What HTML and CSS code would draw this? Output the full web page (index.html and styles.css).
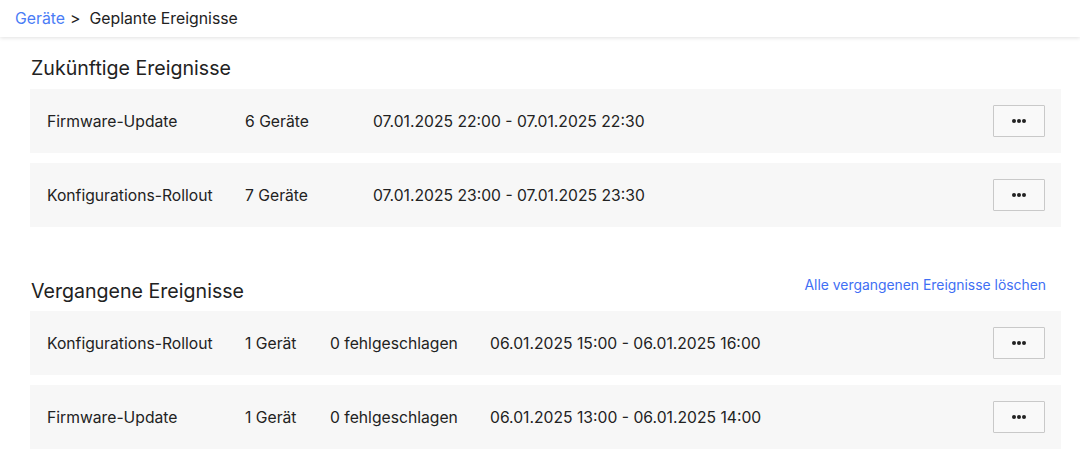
FILE: index.html
```html
<!DOCTYPE html>
<html lang="de">
<head>
<meta charset="utf-8">
<title>Geplante Ereignisse</title>
<link rel="stylesheet" href="styles.css">
</head>
<body>
<header class="topbar">
  <nav class="breadcrumb">
    <a class="crumb-link" href="#">Geräte</a>
    <span class="crumb-sep">&gt;</span>
    <span class="crumb-current">Geplante Ereignisse</span>
  </nav>
</header>
<main class="content">
  <section class="section">
    <div class="section-head">
      <h2 class="section-title">Zukünftige Ereignisse</h2>
    </div>
    <div class="rows">
      <div class="row">
        <span class="col col-name">Firmware-Update</span>
        <span class="col col-devices-wide">6 Geräte</span>
        <span class="col col-time">07.01.2025 22:00 - 07.01.2025 22:30</span>
        <button class="more-btn" type="button" aria-label="Mehr"><span class="dots"><i></i><i></i><i></i></span></button>
      </div>
      <div class="row">
        <span class="col col-name">Konfigurations-Rollout</span>
        <span class="col col-devices-wide">7 Geräte</span>
        <span class="col col-time">07.01.2025 23:00 - 07.01.2025 23:30</span>
        <button class="more-btn" type="button" aria-label="Mehr"><span class="dots"><i></i><i></i><i></i></span></button>
      </div>
    </div>
  </section>
  <section class="section section-past">
    <div class="section-head">
      <h2 class="section-title">Vergangene Ereignisse</h2>
      <a class="clear-link" href="#">Alle vergangenen Ereignisse löschen</a>
    </div>
    <div class="rows">
      <div class="row">
        <span class="col col-name">Konfigurations-Rollout</span>
        <span class="col col-devices">1 Gerät</span>
        <span class="col col-failed">0 fehlgeschlagen</span>
        <span class="col col-time">06.01.2025 15:00 - 06.01.2025 16:00</span>
        <button class="more-btn" type="button" aria-label="Mehr"><span class="dots"><i></i><i></i><i></i></span></button>
      </div>
      <div class="row">
        <span class="col col-name">Firmware-Update</span>
        <span class="col col-devices">1 Gerät</span>
        <span class="col col-failed">0 fehlgeschlagen</span>
        <span class="col col-time">06.01.2025 13:00 - 06.01.2025 14:00</span>
        <button class="more-btn" type="button" aria-label="Mehr"><span class="dots"><i></i><i></i><i></i></span></button>
      </div>
    </div>
  </section>
</main>
</body>
</html>
```
FILE: styles.css
```css
* { box-sizing: border-box; }
html, body {
  margin: 0;
  padding: 0;
  background: #ffffff;
  font-family: Inter, "Noto Sans", "Liberation Sans", sans-serif;
  color: #222222;
}
.topbar {
  height: 37px;
  background: #ffffff;
  box-shadow: 0 1px 4px rgba(0, 0, 0, 0.12);
  display: flex;
  align-items: center;
  padding-left: 15px;
}
.breadcrumb {
  display: flex;
  align-items: center;
  font-size: 15.8px;
  line-height: 20px;
}
.crumb-link {
  color: #4a7cf6;
  text-decoration: none;
}
.crumb-sep {
  margin: 0 9px 0 5px;
  color: #222;
}
.crumb-current { color: #222; }
.content {
  padding: 19px 19px 0 30px;
}
.section-head {
  display: flex;
  justify-content: space-between;
  align-items: flex-start;
  margin-bottom: 9px;
}
.section-title {
  margin: 0 0 0 1px;
  font-size: 19.6px;
  font-weight: 400;
  line-height: 24px;
  color: #222;
}
.section-past {
  margin-top: 52px;
}
.section-past .section-head { margin-bottom: 8px; }
.clear-link {
  color: #3f6ff4;
  text-decoration: none;
  font-size: 13.9px;
  line-height: 18px;
  margin-top: -3px;
  margin-right: 15px;
}
.rows {
  display: flex;
  flex-direction: column;
  gap: 10px;
}
.row {
  height: 64px;
  background: #f7f7f7;
  display: flex;
  align-items: center;
  padding: 0 16px 0 17px;
  font-size: 15.7px;
  color: #222;
}
.col { white-space: nowrap; }
.col-name { width: 198px; }
.col-devices-wide { width: 128px; }
.col-devices { width: 85px; }
.col-failed { width: 160px; }
.col-time { flex: 1; }
.more-btn {
  width: 52px;
  height: 32px;
  border: 1px solid #c9c9c9;
  border-radius: 1px;
  background: #f9f9f9;
  display: flex;
  align-items: center;
  justify-content: center;
  padding: 0;
  cursor: pointer;
}
.dots {
  display: flex;
  gap: 1px;
}
.dots i {
  display: block;
  width: 4px;
  height: 4px;
  border-radius: 50%;
  background: #222;
}
```
